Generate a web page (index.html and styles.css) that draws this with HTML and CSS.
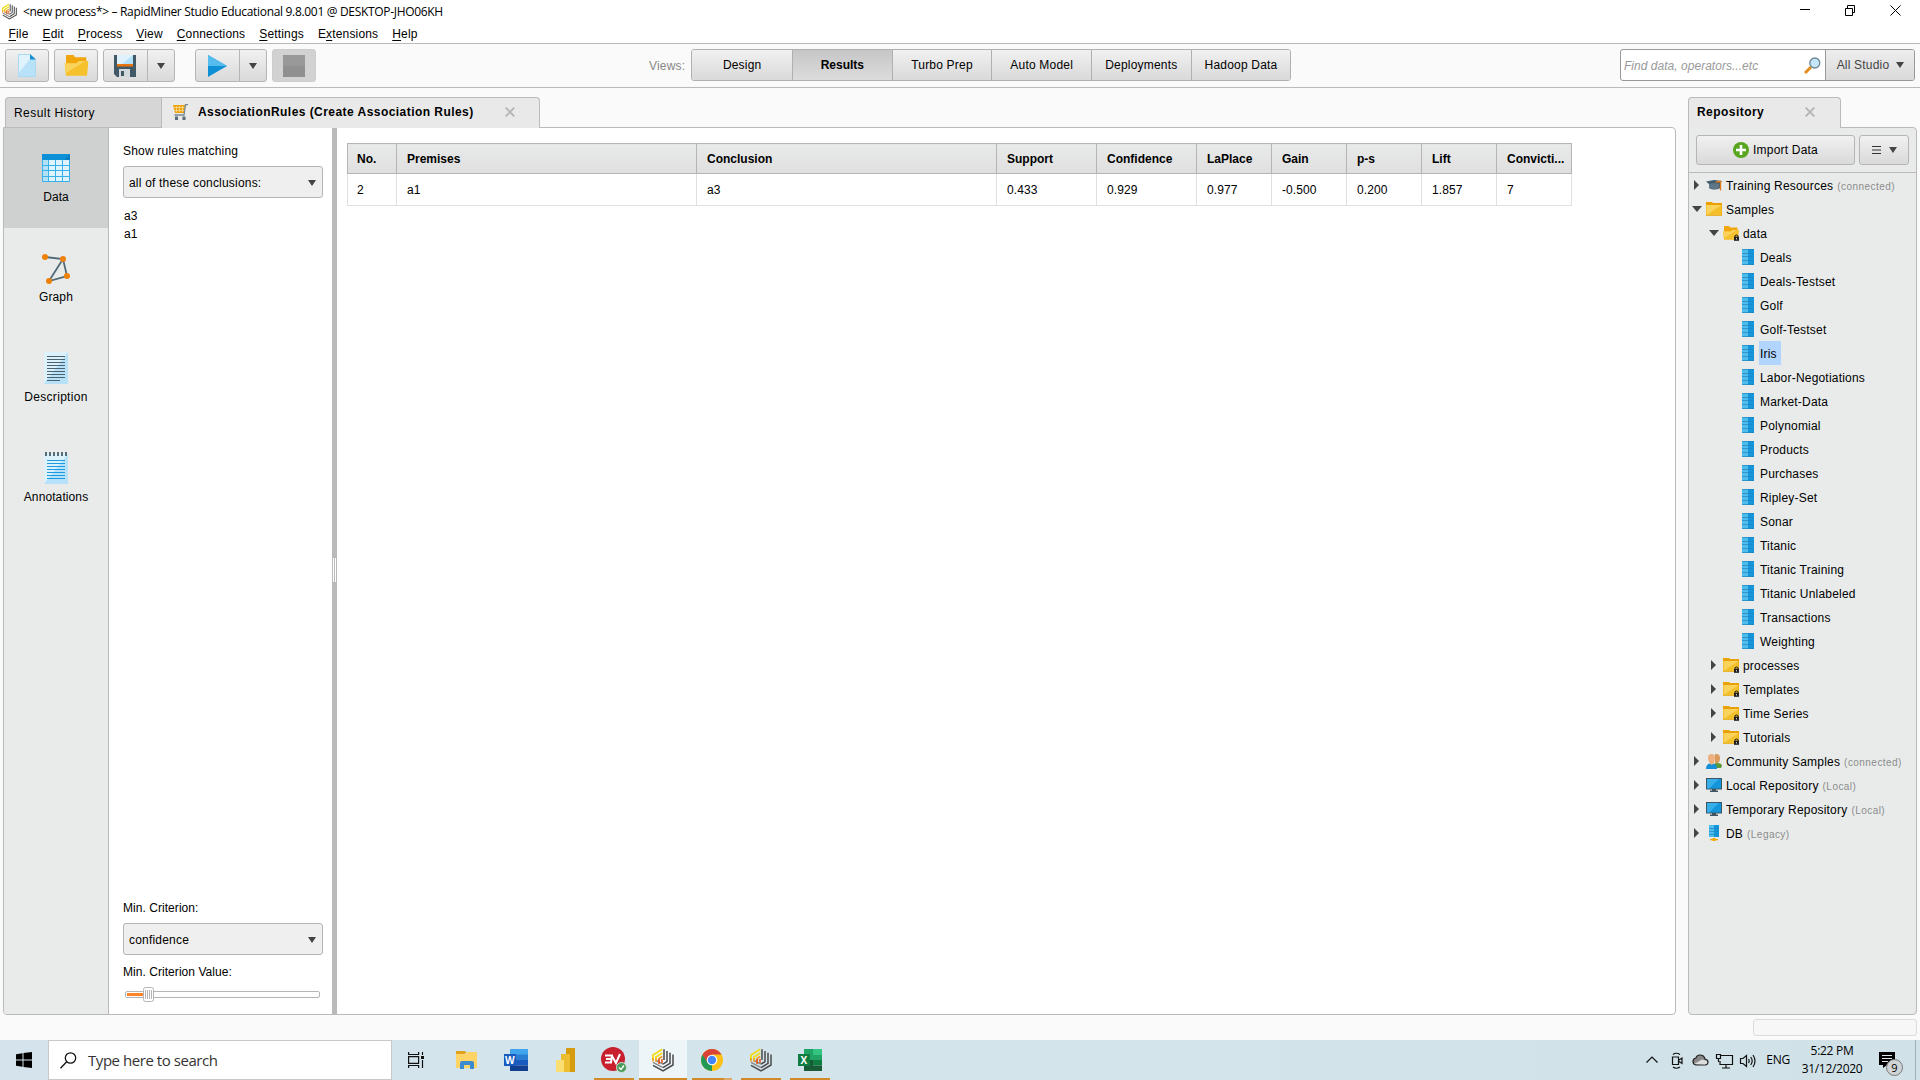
FILE: index.html
```html
<!DOCTYPE html>
<html lang="en">
<head>
<meta charset="utf-8">
<title>RapidMiner Studio</title>
<link rel="stylesheet" href="styles.css">
</head>
<body>
<svg class="defs" width="0" height="0" aria-hidden="true">
  <symbol id="rm" viewBox="0 0 22 24">
    <g fill="none" stroke-width="1.500">
      <path stroke="#4a4a4a" d="M21 6.500V17L11 23 1 17.300M18 4.800V15.300L11 19.700M15 3V13.600L11 16.200M12 1.200V12"/>
      <path stroke="#8a8a8a" d="M11 19.700L1 14.300M11 16.200L4 12.500"/>
      <path stroke="#f2dc1e" stroke-width="1.900" d="M1 12V7L10.300 1.300M4 12V9L10.300 5"/>
      <path stroke="#f09a1c" d="M1 10v3.500M4 10.500v3.500M7 14v-3.500l3.300-2"/>
      <path stroke="#e4521b" d="M7 11v5M10 11v4"/>
    </g>
  </symbol>
  <symbol id="folder" viewBox="0 0 16 14">
    <path fill="#e9a000" d="M0 0h6l1 1h9v12.700H0z"/><path fill="#f3c02c" d="M.5 3h15v10H.5z"/><path fill="#f9d35c" d="M.5 3h15L.5 13z"/>
  </symbol>
  <symbol id="folder-open" viewBox="0 0 16 14">
    <path fill="#f2a60d" d="M1 0h5l1 1.500h7.500V12H1z"/><path fill="#f5c12c" d="M0 5.500h8l1.500-1.500H16l-1 9.800H1z"/><path fill="#f9d35c" d="M0 5.500h8l1.500-1.500H14L1 12z"/>
  </symbol>
  <symbol id="lock" viewBox="0 0 6 8">
    <path fill="#222" d="M0 3h6v5H0z"/><path fill="none" stroke="#222" stroke-width="1.200" d="M1.200 3.500V1.800Q3 0 4.800 1.800v1.700"/><path fill="#ddd" d="M2.500 4.500h1v2h-1z"/>
  </symbol>
  <symbol id="dataset" viewBox="0 0 12 16">
    <path fill="#4fbcee" d="M0 0h6v16H0z"/><path fill="#1496dc" d="M6 0h6v16H6z"/>
    <path stroke="#1f86bd" d="M0 .5h12M0 4.500h12M0 7.500h12M0 11.500h12M0 15.500h12" opacity=".7"/>
  </symbol>
  <symbol id="monitor" viewBox="0 0 16 14">
    <path fill="#3e5561" d="M0 0h16v11.500H0z"/><path fill="#1296db" d="M1 1h14v9.500H1z"/><path fill="#35aeea" d="M1 1h12L3 10.500H1z"/><path fill="#3e5561" d="M6 11h4v2H6zM4 12.500h8V14H4z"/>
  </symbol>
  <symbol id="people" viewBox="0 0 16 15">
    <path fill="#5b9a34" d="M7 14q0-5 4-5 5 0 5 3l-1 2z"/><path fill="#d99a5e" d="M9 0q5-.5 5 4 0 4-2 5H9z"/>
    <path fill="#1590d8" d="M0 15q0-5 4-5.500h3Q11 10 11 15z"/><path fill="#eeb07e" d="M2 4q0-4 3.500-4T9 4q0 3-1.500 5.500Q5.500 12 4 9.500 2 7 2 4z"/>
  </symbol>
  <symbol id="cap" viewBox="0 0 16 11">
    <path fill="#445b69" d="M0 1.500L8 0l8 1-1.500 2v5Q8 11 3 8V4z"/><path fill="#5e7686" d="M3 4q5-2 10 0v4Q8 10.500 3 8z"/><path fill="none" stroke="#e37a18" stroke-width="1.300" d="M10 2l4.500-.5V10.500"/>
  </symbol>
  <symbol id="db" viewBox="0 0 12 16">
    <path fill="#4fbcee" d="M1 0h5v12H1z"/><path fill="#1496dc" d="M6 0h5v12H6z"/><path stroke="#1f86bd" d="M1 3.500h10M1 6.500h10M1 9.500h10" opacity=".7"/><path fill="#f0a400" d="M2 14h8v1.200H2zM4.500 13h3v3h-3z"/>
  </symbol>
  <symbol id="close" viewBox="0 0 10 10"><path fill="none" stroke="#b5b5b5" stroke-width="1.900" d="M.7.7l8.600 8.600M9.300.7L.7 9.300"/></symbol>
</svg>

<header class="titlebar">
  <svg class="app-icon" width="15" height="17"><use href="#rm"/></svg>
  <span class="window-title">&lt;new process*&gt; – RapidMiner Studio Educational 9.8.001 @ DESKTOP-JHO06KH</span>
  <svg class="window-buttons" width="102" height="12" viewBox="0 0 102 12" fill="none" stroke="#000"><path d="M0 5.500h10M45.500 4.500h7v7h-7zM47.500 4.500v-3h7v7h-2M90.500 1.500l10 10M100.500 1.500l-10 10"/></svg>
</header>
<nav class="menubar">
  <span><u>F</u>ile</span><span><u>E</u>dit</span><span><u>P</u>rocess</span><span><u>V</u>iew</span><span><u>C</u>onnections</span><span><u>S</u>ettings</span><span>E<u>x</u>tensions</span><span><u>H</u>elp</span>
</nav>

<div class="toolbar">
  <div class="tools">
    <div class="button"><svg width="18" height="23" viewBox="0 0 18 23"><path fill="#b8e2f8" d="M0 0h12l6 6v17H0z"/><path fill="#e0f2fc" d="M0 0h12v5L0 20z"/><path fill="none" stroke="#a8daf4" d="M.5.500H12M.5.500v22h17V6"/><path fill="#1590cf" d="M12 0l6 5.500h-6z"/></svg></div>
    <div class="button"><svg width="25" height="21" viewBox="0 0 16 14"><use href="#folder-open"/></svg></div>
    <div class="button split">
      <span class="face"><svg width="22" height="22" viewBox="0 0 22 22"><path fill="#415866" d="M0 0h22v22H3l-3-3z"/><path fill="#b5e1f8" d="M3 0h16v10H3z"/><path fill="#dff2fc" d="M3 0h16L8 9H3z"/><path fill="#e8750e" d="M3 9h16v2.500H3z"/><path fill="#d3d9dc" d="M5 14h11v8H5z"/><path fill="#415866" d="M7 16h3v5H7z"/></svg></span>
      <span class="drop"><i class="arrow"></i></span>
    </div>
    <div class="button split run">
      <span class="face"><svg width="19" height="22" viewBox="0 0 19 22"><path fill="#0f8fd6" d="M0 0l19 11L0 22z"/><path fill="#54bdee" d="M0 0l19 11H0z"/></svg></span>
      <span class="drop"><i class="arrow"></i></span>
    </div>
    <div class="button stop"><svg width="22" height="22"><path fill="#999" d="M0 0h22v22H0z"/><path fill="#909090" d="M0 11h22v11H0z"/></svg></div>
  </div>
  <div class="views">
    <span class="views-label">Views:</span>
    <div class="segments"><span>Design</span><span class="current">Results</span><span>Turbo Prep</span><span>Auto Model</span><span>Deployments</span><span>Hadoop Data</span></div>
  </div>
  <div class="search">
    <span class="search-field">Find data, operators...etc
      <svg width="17" height="17" viewBox="0 0 17 17"><path stroke="#e28d1c" stroke-width="3" d="M1 16l6-6"/><circle cx="10.800" cy="6" r="5" fill="#c5e6f8" stroke="#6d8795" stroke-width="1.300"/></svg>
    </span>
    <span class="scope">All Studio <i class="arrow"></i></span>
  </div>
</div>

<main class="workspace">
  <section class="results">
    <div class="tabs">
      <div class="tab history">Result History</div>
      <div class="tab active">
        <svg width="15" height="16" viewBox="0 0 15 16"><path fill="#eda10c" d="M0 1h12l-1 8H2z"/><path stroke="#fbe0a0" fill="none" d="M1 3.500h10M2 6.500h9M3.500 2v6M6.500 2v6M9.500 2v6" stroke-width=".7"/><path fill="none" stroke="#778a94" stroke-width="1.300" d="M15 .7h-2.500L11 11H1.500"/><path fill="#596e7a" d="M2 12.500h3V16H2zM9.500 12.500h3V16h-3z"/></svg>
        <span class="tab-title">AssociationRules (Create Association Rules)</span>
        <svg width="10" height="10"><use href="#close"/></svg>
      </div>
    </div>
    <div class="result-body">
      <aside class="modes">
        <div class="mode selected"><span class="mode-icon"><svg width="28" height="28" viewBox="0 0 28 28"><path fill="#dff3fd" d="M0 0h28v28H0z"/><path fill="#b3e1f8" d="M0 6h6v22H0z"/><path fill="#0e90d6" d="M0 0h28v6H0z"/><path fill="#087fc2" d="M28 0v6h-6z"/><path fill="none" stroke="#38b1ea" d="M.5 6v21.500h27V6M6.500 6v22M13.500 6v22M20.500 6v22M0 11.500h28M0 16.500h28M0 22.500h28"/></svg></span>Data</div>
        <div class="mode"><span class="mode-icon"><svg width="28" height="31" viewBox="0 0 28 31"><path fill="none" stroke="#536a78" stroke-width="1.800" d="M3 4l18 2 4 17-18 5L21 6"/><g fill="#ee8208"><circle cx="3" cy="4" r="3"/><circle cx="21" cy="6" r="3"/><circle cx="25" cy="23" r="3"/><circle cx="7" cy="28" r="3"/></g></svg></span>Graph</div>
        <div class="mode description"><span class="mode-icon"><svg width="24" height="32" viewBox="0 0 24 32"><path fill="#b7e1f8" d="M0 0h24v32H0z"/><path fill="#ddf1fb" d="M0 0h24L0 32z"/><path stroke="#4b626f" d="M3 4.500h18M3 7.500h18M3 10.500h18M3 13.500h18M3 16.500h18M3 19.500h18M3 22.500h18M3 25.500h18M3 28.500h13"/></svg></span>Description</div>
        <div class="mode"><span class="mode-icon"><svg width="24" height="32" viewBox="0 0 24 32"><path fill="#b7e1f8" d="M0 2h24v30H0z"/><path fill="#ddf1fb" d="M0 2h24L0 32z"/><path stroke="#1b9be0" d="M3 8.500h18M3 11.500h18M3 14.500h18M3 17.500h18M3 20.500h18M3 23.500h18M3 26.500h18"/><path stroke="#566c79" stroke-width="4" stroke-dasharray="2 2" d="M1 2h22"/></svg></span>Annotations</div>
      </aside>
      <div class="filter">
        <label>Show rules matching</label>
        <div class="combo">all of these conclusions: <i class="arrow"></i></div>
        <ul class="conclusions"><li>a3</li><li>a1</li></ul>
        <div class="criterion">
          <label>Min. Criterion:</label>
          <div class="combo">confidence <i class="arrow"></i></div>
          <label>Min. Criterion Value:</label>
          <svg class="slider" width="200" height="15" viewBox="0 0 200 15"><rect x="2.500" y="4.500" width="194" height="6" rx="1.500" fill="#fff" stroke="#b5b5b5"/><path fill="#ff8327" d="M4 6h17v3H4z"/><rect x="20.500" y=".5" width="10" height="14" rx="2" fill="#fff" stroke="#b5b5b5"/><path stroke="#b5b5b5" d="M22.500 3v9M24.500 3v9M26.500 3v9M28.500 3v9"/></svg>
        </div>
      </div>
      <div class="splitter"><i></i></div>
      <div class="rules">
        <table>
          <colgroup><col class="c-no"><col class="c-wide"><col class="c-wide"><col class="c-mid"><col class="c-mid"><col><col><col><col><col></colgroup>
          <thead><tr><th>No.</th><th>Premises</th><th>Conclusion</th><th>Support</th><th>Confidence</th><th>LaPlace</th><th>Gain</th><th>p-s</th><th>Lift</th><th>Convicti...</th></tr></thead>
          <tbody><tr><td>2</td><td>a1</td><td>a3</td><td>0.433</td><td>0.929</td><td>0.977</td><td>-0.500</td><td>0.200</td><td>1.857</td><td>7</td></tr></tbody>
        </table>
      </div>
    </div>
  </section>

  <section class="repository">
    <div class="tabs">
      <div class="tab active"><span class="tab-title">Repository</span><svg width="10" height="10"><use href="#close"/></svg></div>
    </div>
    <div class="repo-body">
      <div class="repo-actions">
        <div class="button import"><svg width="16" height="16" viewBox="0 0 16 16"><circle cx="8" cy="8" r="8" fill="#58a51f"/><path stroke="#fff" stroke-width="2.600" d="M8 3v10M3 8h10"/></svg>Import Data</div>
        <div class="button menu"><svg width="9" height="8" viewBox="0 0 9 8"><path stroke="#333" d="M0 .5h9M0 4h9M0 7.500h9"/></svg><i class="arrow"></i></div>
      </div>
      <ul class="tree">
        <li><i class="twist"></i><svg width="16" height="11"><use href="#cap"/></svg><span>Training Resources</span><small>(connected)</small></li>
        <li><i class="twist open"></i><svg width="16" height="14"><use href="#folder"/></svg><span>Samples</span></li>
        <li class="l1"><i class="twist open"></i><span class="locked"><svg width="16" height="14"><use href="#folder-open"/></svg><svg class="lock" width="5" height="7"><use href="#lock"/></svg></span><span>data</span></li>
        <li class="l2"><svg width="12" height="16"><use href="#dataset"/></svg><span>Deals</span></li>
        <li class="l2"><svg width="12" height="16"><use href="#dataset"/></svg><span>Deals-Testset</span></li>
        <li class="l2"><svg width="12" height="16"><use href="#dataset"/></svg><span>Golf</span></li>
        <li class="l2"><svg width="12" height="16"><use href="#dataset"/></svg><span>Golf-Testset</span></li>
        <li class="l2"><svg width="12" height="16"><use href="#dataset"/></svg><span class="picked">Iris</span></li>
        <li class="l2"><svg width="12" height="16"><use href="#dataset"/></svg><span>Labor-Negotiations</span></li>
        <li class="l2"><svg width="12" height="16"><use href="#dataset"/></svg><span>Market-Data</span></li>
        <li class="l2"><svg width="12" height="16"><use href="#dataset"/></svg><span>Polynomial</span></li>
        <li class="l2"><svg width="12" height="16"><use href="#dataset"/></svg><span>Products</span></li>
        <li class="l2"><svg width="12" height="16"><use href="#dataset"/></svg><span>Purchases</span></li>
        <li class="l2"><svg width="12" height="16"><use href="#dataset"/></svg><span>Ripley-Set</span></li>
        <li class="l2"><svg width="12" height="16"><use href="#dataset"/></svg><span>Sonar</span></li>
        <li class="l2"><svg width="12" height="16"><use href="#dataset"/></svg><span>Titanic</span></li>
        <li class="l2"><svg width="12" height="16"><use href="#dataset"/></svg><span>Titanic Training</span></li>
        <li class="l2"><svg width="12" height="16"><use href="#dataset"/></svg><span>Titanic Unlabeled</span></li>
        <li class="l2"><svg width="12" height="16"><use href="#dataset"/></svg><span>Transactions</span></li>
        <li class="l2"><svg width="12" height="16"><use href="#dataset"/></svg><span>Weighting</span></li>
        <li class="l1"><i class="twist"></i><span class="locked"><svg width="16" height="14"><use href="#folder"/></svg><svg class="lock" width="5" height="7"><use href="#lock"/></svg></span><span>processes</span></li>
        <li class="l1"><i class="twist"></i><span class="locked"><svg width="16" height="14"><use href="#folder"/></svg><svg class="lock" width="5" height="7"><use href="#lock"/></svg></span><span>Templates</span></li>
        <li class="l1"><i class="twist"></i><span class="locked"><svg width="16" height="14"><use href="#folder"/></svg><svg class="lock" width="5" height="7"><use href="#lock"/></svg></span><span>Time Series</span></li>
        <li class="l1"><i class="twist"></i><span class="locked"><svg width="16" height="14"><use href="#folder"/></svg><svg class="lock" width="5" height="7"><use href="#lock"/></svg></span><span>Tutorials</span></li>
        <li><i class="twist"></i><svg width="16" height="15"><use href="#people"/></svg><span>Community Samples</span><small>(connected)</small></li>
        <li><i class="twist"></i><svg width="16" height="14"><use href="#monitor"/></svg><span>Local Repository</span><small>(Local)</small></li>
        <li><i class="twist"></i><svg width="16" height="14"><use href="#monitor"/></svg><span>Temporary Repository</span><small>(Local)</small></li>
        <li><i class="twist"></i><svg width="16" height="16"><use href="#db"/></svg><span>DB</span><small>(Legacy)</small></li>
      </ul>
    </div>
  </section>
</main>
<div class="statusbar"><span class="progress"></span></div>

<footer class="taskbar">
  <div class="start"><svg width="16" height="16" viewBox="0 0 16 16"><path d="M0 2.200L6.500 1.300v6.200H0zM7.500 1.100L16 0v7.500H7.500zM0 8.500h6.500v6.200L0 13.800zM7.500 8.500H16V16l-8.500-1.100z"/></svg></div>
  <div class="task-search"><svg width="17" height="17" viewBox="0 0 17 17" fill="none" stroke="#111" stroke-width="1.300"><circle cx="10.500" cy="6" r="5.200"/><path d="M6.700 9.800L.5 16.200"/></svg>Type here to search</div>
  <div class="apps">
    <div class="app task-view"><svg width="16" height="16" viewBox="0 0 16 16" fill="none" stroke="#111" stroke-width="1.200"><path d="M.6 0v2.500h10V0M.6 16v-2.500h10V16M.6 4.600h10v6.800H.6zM14.500 0v3M14.500 8v8"/><path fill="#111" stroke="none" d="M13 4h3v3h-3z"/></svg></div>
    <div class="app"><svg width="22" height="18" viewBox="0 0 22 18"><path fill="#dfa21a" d="M0 0h9l2 2h-2v3H0z"/><path fill="#ffd466" d="M0 3h10l1-2h10v16H0z"/><path fill="#3a8bd0" d="M4 18v-6q0-2 2-2h10q2 0 2 2v6h-4v-4H8v4z"/></svg></div>
    <div class="app"><svg width="24" height="22" viewBox="0 0 24 22"><path fill="#41a5ee" d="M6 0h18v6H6z"/><path fill="#2b7cd3" d="M6 5.500h18V11H6z"/><path fill="#185abd" d="M6 11h18v5.500H6z"/><path fill="#103f91" d="M6 16.500h18V22H6z"/><path fill="#185abd" d="M0 5h12v12H0z"/><text x="1" y="14.500" class="glyph">W</text></svg></div>
    <div class="app"><svg width="19" height="24" viewBox="0 0 19 24"><path fill="#d79b10" d="M10 0h9v24h-9z"/><path fill="#edbd30" d="M5 6h9v18H5z"/><path fill="#f9df73" d="M0 12h8v12H0z"/></svg></div>
    <div class="app running"><svg width="26" height="26" viewBox="0 0 26 26"><circle cx="12" cy="12" r="12" fill="#c8202f"/><path fill="none" stroke="#fff" stroke-width="2" d="M4 8.500h7l-1 7H4M5 12h6M11 9l4 7 4-9"/><circle cx="20.500" cy="20.500" r="5" fill="#4a9a5a" stroke="#cfe3d8"/><path fill="none" stroke="#fff" stroke-width="1.400" d="M18 20.500l2 2 3-4"/></svg></div>
    <div class="app running focus"><svg width="22" height="24"><use href="#rm"/></svg></div>
    <div class="app running grouped"><svg width="22" height="22" viewBox="0 0 22 22"><circle cx="11" cy="11" r="11" fill="#fbc116"/><path fill="#229954" d="M1.500 5.500L11 16v6A11 11 0 0 1 1.500 5.500z"/><path fill="#da4437" d="M11 5.500h9.500A11 11 0 0 0 1.500 5.500l5 8z"/><circle cx="11" cy="11" r="5.300" fill="#fff"/><circle cx="11" cy="11" r="4.200" fill="#4285f4"/></svg></div>
    <div class="app running"><svg width="22" height="24"><use href="#rm"/></svg></div>
    <div class="app running"><svg width="24" height="22" viewBox="0 0 24 22"><path fill="#21a366" d="M6 0h9v11H6z"/><path fill="#33c481" d="M15 0h9v6h-9z"/><path fill="#21a366" d="M15 6h9v5h-9z"/><path fill="#107c41" d="M15 11h9v5.500h-9z"/><path fill="#185c37" d="M6 11h9v5.500h9V22H6z"/><path fill="#107c41" d="M0 5h12v12H0z"/><text x="2.500" y="14.500" class="glyph">X</text></svg></div>
  </div>
  <div class="tray">
    <svg width="110" height="17" viewBox="0 0 110 17" fill="none" stroke="#111" stroke-width="1.200"><path d="M.5 10.500l5.500-5.500 5.500 5.500"/><path d="M26.500 5h6v7.500h-6zM33 8l3-2v5.500l-3-2M27 2.500q3-2.500 7 0M27 15q3 2.500 7 0"/><path fill="#888" stroke="#222" d="M50 13h9q3-.5 3-3t-3-3q-1-4-5-4-3.500 0-4 3-3 .5-3 3.500 0 3 3 3.500z"/><path fill="#ddd" stroke="none" d="M48 12l8-4.500 5 1.500q1 3-2 3.500z"/><path d="M75 3.500h11.500v9H74V9M70.500 2.500h4v4h-4zM72.500 7v3M80 13v3M76 16h8"/><path d="M94.500 6.500h2.500l3.500-3v11l-3.500-3h-2.500zM102.500 7q1.500 2 0 4M104.700 5q3 4 0 8M107 3q4 6 0 12"/></svg>
    <span class="lang">ENG</span>
    <span class="clock"><span>5:22 PM</span><span>31/12/2020</span></span>
    <svg class="notice" width="25" height="25" viewBox="0 0 25 25"><path d="M0 0h16v13H8l-4 3v-3H0z"/><path stroke="#dde8ee" d="M3 3.500h10M3 6.500h10M3 9.500h6"/><circle cx="15.500" cy="15.500" r="8" fill="#d0d4d6" stroke="#777"/><text x="12.300" y="20">9</text></svg>
    <i class="desktop-edge"></i>
  </div>
</footer>
</body>
</html>
```
FILE: styles.css
```css
* { box-sizing: border-box; }
html, body { height: 100%; margin: 0; }
body {
  display: flex;
  flex-direction: column;
  overflow: hidden;
  background: #fafafa;
  color: #000;
  font: 12px/16px "Liberation Sans", Arial, sans-serif;
  letter-spacing: .2px;
  white-space: nowrap;
}
ul { list-style: none; margin: 0; padding: 0; }
svg { display: block; flex: none; }
.defs { position: absolute; }

.titlebar { display: flex; align-items: flex-start; height: 24px; padding: 3px 18px 0 2px; background: #fff; }
.window-title { margin: 1px 0 0 6px; font: 12px/16px "Open Sans", sans-serif; letter-spacing: -.32px; }
.window-buttons { margin: 1px 0 0 auto; }

.menubar { display: flex; gap: 14px; height: 20px; padding: 2px 8.500px 0; background: #fff; border-bottom: 1px solid #bababa; letter-spacing: .16px; }
.menubar u { text-underline-offset: 2px; }

.toolbar { display: flex; justify-content: space-between; height: 44px; padding: 5px 5px 0; border-bottom: 1px solid #bababa; }
.tools { display: flex; gap: 5px; width: 644px; }
.button {
  display: flex; align-items: center; justify-content: center;
  width: 44px; height: 33px;
  background: linear-gradient(#f1f1f1, #d9d9d9);
  border: 1px solid #b5b5b5; border-radius: 3px;
}
.split { width: 72px; align-items: stretch; }
.face { display: flex; align-items: center; justify-content: center; flex: 1; padding-right: 1px; }
.drop { display: flex; align-items: center; justify-content: center; width: 27px; border-left: 1px solid #b5b5b5; }
.run { margin-left: 15px; }
.stop { background: #d2d2d2; border-color: #cdcdcd; }
.arrow { width: 0; height: 0; border: 4px solid transparent; border-top: 6px solid #444; border-bottom: 0; }

.views { display: flex; align-items: center; height: 32px; gap: 6px; margin-right: auto; }
.views-label { padding-top: 1px; color: #888; }
.segments { display: flex; width: 600px; height: 32px; border: 1px solid #b0b0b0; border-radius: 3px; overflow: hidden; }
.segments span { width: 100px; text-align: center; line-height: 30px; background: linear-gradient(#f1f1f1, #d9d9d9); }
.segments span + span { border-left: 1px solid #b0b0b0; }
.segments .current { font-weight: bold; letter-spacing: 0; background: linear-gradient(#c6c6c6, #dcdcdc); }

.search { display: flex; width: 295px; height: 32px; border: 1px solid #999; border-radius: 3px; background: #fff; overflow: hidden; }
.search-field { display: flex; flex: 1; align-items: center; justify-content: space-between; padding: 1px 4px 0 3px; color: #999; font-style: italic; letter-spacing: .03px; }
.scope { display: flex; align-items: center; justify-content: center; gap: 7px; width: 89px; padding-left: 1px; border-left: 1px solid #999; background: linear-gradient(#eee, #d9d9d9); color: #444; }

.workspace { display: flex; justify-content: space-between; height: 927px; padding: 9px 3px 0; }
.results { width: 1673px; }
.repository { width: 229px; }
.tabs { display: flex; height: 30px; }
.results .tabs { padding-left: 2px; }
.tab { display: flex; align-items: center; height: 30px; border: 1px solid #bababa; border-bottom: 0; letter-spacing: .45px; }
.history { width: 156px; padding-left: 8px; background: #d6d6d6; border-radius: 4px 0 0 0; border-right: 0; }
.tab.active { position: relative; height: 31px; background: #e9e9e9; font-weight: bold; border-radius: 0 4px 0 0; }
.results .tab.active { width: 379px; padding: 0 24px 2px 11px; }
.results .tab-title { margin: 0 auto 0 10px; }
.repository .tab.active { width: 153px; padding: 0 25px 2px 8px; justify-content: space-between; border-radius: 4px 4px 0 0; }

.result-body { display: flex; height: 888px; border: 1px solid #bababa; border-radius: 0 4px 4px 4px; background: #fff; overflow: hidden; }
.modes { width: 105px; background: #e8ebea; border-right: 1px solid #bababa; }
.mode { display: flex; flex-direction: column; align-items: center; height: 100px; padding-top: 20px; letter-spacing: .1px; }
.description { letter-spacing: .3px; }
.mode-icon { display: flex; align-items: center; height: 40px; margin-bottom: 1px; }
.selected { background: #cfd1d0; }

.filter { display: flex; flex-direction: column; width: 223px; padding: 15px 9px 12px 14px; }
.combo { display: flex; align-items: center; justify-content: space-between; width: 200px; height: 32px; margin-top: 7px; padding: 1px 6px 0 5px; border: 1px solid #b5b5b5; border-radius: 3px; background: #efefef; }
.conclusions { padding: 9px 1px; line-height: 18px; }
.criterion { display: flex; flex-direction: column; margin-top: auto; letter-spacing: .05px; }
.criterion .combo { margin-bottom: 9px; letter-spacing: .2px; }
.slider { margin-top: 7px; }
.splitter { display: flex; align-items: center; justify-content: center; width: 5px; background: #bababa; }
.splitter i { width: 3px; height: 24px; margin-bottom: 2px; border: solid #fff; border-width: 0 1px; }
.rules { padding: 15px 0 0 10px; }
table { width: 1225px; table-layout: fixed; border-collapse: collapse; letter-spacing: 0; }
col { width: 75px; }
.c-no { width: 49px; }
.c-wide { width: 300px; }
.c-mid { width: 100px; }
th, td { padding: 0 0 0 10px; text-align: left; }
th:first-child, td:first-child { padding-left: 9px; }
th { height: 30px; border: 1px solid #b5b5b5; background: linear-gradient(#e8eae9, #dfdfdf); }
td { height: 32px; border: 1px solid #e0e0e0; letter-spacing: .1px; }

.repo-body { height: 888px; background: #e8ebea; border: 1px solid #bababa; border-radius: 0 4px 4px 4px; }
.repo-actions { display: flex; gap: 4px; height: 45px; padding: 7px 7px 0; border-bottom: 1px solid #bababa; }
.repo-actions .button { height: 30px; }
.import { width: 159px !important; gap: 4px; }
.menu { width: 50px !important; gap: 8px; }
.tree li { display: flex; align-items: center; height: 24px; padding-left: 17px; }
.tree .l1 { padding-left: 34px; }
.tree .l2 { padding-left: 53px; }
.tree span:not(.locked) { margin-left: 3px; padding: 5px 1px 3px; }
.tree .l2 span { margin-left: 5px; }
.twist { width: 5px; height: 0; margin: 0 7px 0 -12px; border: 5px solid transparent; border-left: 5px solid #444; border-right: 0; }
.twist.open { width: 10px; margin: 0 4px 0 -14px; border: 5px solid transparent; border-top: 6px solid #444; border-bottom: 0; }
.locked { position: relative; }
.lock { position: absolute; right: 0; bottom: -1px; }
.tree .picked { background: #b2d5ff; padding-right: 4px !important; }
small { margin: 4px 0 0 3px; color: #8c8c8c; font-size: 10px; letter-spacing: .45px; }

.statusbar { display: flex; justify-content: flex-end; height: 25px; padding: 4px 3px 0; }
.progress { width: 164px; height: 17px; border: 1px solid #dcdcdc; border-radius: 3px; background: #f7f7f7; }

.taskbar { display: flex; height: 40px; background: linear-gradient(90deg, #d5e4ec, #d3e4eb 60%, #d0e1e8); font-family: "Open Sans", sans-serif; }
.start { display: flex; align-items: center; justify-content: center; width: 48px; }
.task-search { display: flex; align-items: center; gap: 11px; width: 344px; padding-left: 11px; background: #fff; border: 1px solid #c5c9cb; color: #333; font-size: 15px; letter-spacing: -.45px; }
.apps { display: flex; }
.app { display: flex; align-items: center; justify-content: center; width: 48px; margin-right: 1px; }
.task-view { margin-right: 3px; }
.running { background: linear-gradient(#d08a28, #d08a28) center bottom / 40px 2px no-repeat; }
.focus { background: linear-gradient(#d08a28, #d08a28) center bottom / 48px 2px no-repeat, #eef5f8; }
.grouped { background: linear-gradient(90deg, #d08a28 32px, #dbaa6b 32px) center bottom / 40px 2px no-repeat; }
.glyph { fill: #fff; font: bold 10px "Open Sans", sans-serif; letter-spacing: 0; }
.tray { display: flex; align-items: center; margin-left: auto; letter-spacing: -.2px; }
.lang { margin-left: 10px; }
.clock { display: flex; flex-direction: column; align-items: center; width: 66px; margin: 0 14px 0 9px; line-height: 18px; letter-spacing: -.3px; }
.notice { margin-top: 8px; font-size: 11px; }
.desktop-edge { width: 1px; height: 40px; margin: 0 4px 0 11px; background: #9fb0b8; }
```
